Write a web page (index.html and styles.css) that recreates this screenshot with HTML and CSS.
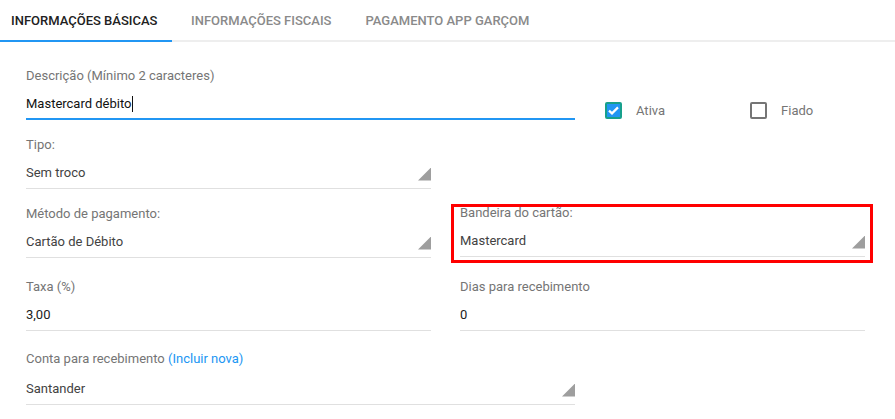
FILE: index.html
```html
<!DOCTYPE html>
<html lang="pt-BR">
<head>
    <meta charset="UTF-8">
    <title>Forma de pagamento</title>
    <link rel="stylesheet" href="styles.css">
</head>
<body>
    <div class="tabs">
        <div class="tab tab-active">Informações básicas</div>
        <div class="tab tab-second">Informações fiscais</div>
        <div class="tab tab-third">Pagamento app garçom</div>
        <div class="tab-rest"></div>
    </div>

    <div class="form">
        <div class="row row-first">
            <div class="field field-wide field-focus">
                <div class="field-label">Descrição (Mínimo 2 caracteres)</div>
                <div class="field-value">Mastercard débito<span class="caret"></span></div>
            </div>
            <label class="check check-ativa">
                <span class="check-box check-on">
                    <svg width="11" height="9" viewBox="0 0 11 9"><path d="M1 4.6 L4 7.4 L10 1.4" fill="none" stroke="#fff" stroke-width="2.2"/></svg>
                </span>
                <span class="check-text">Ativa</span>
            </label>
            <label class="check check-fiado">
                <span class="check-box"></span>
                <span class="check-text">Fiado</span>
            </label>
        </div>

        <div class="row">
            <div class="field">
                <div class="field-label">Tipo:</div>
                <div class="field-value">Sem troco<span class="arrow"></span></div>
            </div>
        </div>

        <div class="row row-split row-metodo">
            <div class="field">
                <div class="field-label">Método de pagamento:</div>
                <div class="field-value">Cartão de Débito<span class="arrow"></span></div>
            </div>
            <div class="highlight">
                <div class="field">
                    <div class="field-label">Bandeira do cartão:</div>
                    <div class="field-value">Mastercard<span class="arrow"></span></div>
                </div>
            </div>
        </div>

        <div class="row row-split row-taxa">
            <div class="field">
                <div class="field-label">Taxa (%)</div>
                <div class="field-value value-dark">3,00</div>
            </div>
            <div class="field">
                <div class="field-label">Dias para recebimento</div>
                <div class="field-value value-dark">0</div>
            </div>
        </div>

        <div class="row">
            <div class="field field-wide">
                <div class="field-label label-gap">Conta para recebimento <a href="#" class="link">(Incluir nova)</a></div>
                <div class="field-value">Santander<span class="arrow"></span></div>
            </div>
        </div>
    </div>
</body>
</html>
```

FILE: styles.css
```css
body {
    margin: 0;
    font-family: Roboto, "Liberation Sans", sans-serif;
    background: #fff;
    color: #333;
}

/* abas */
.tabs {
    display: flex;
    height: 42px;
}

.tab {
    display: flex;
    align-items: center;
    padding: 0 17px 0 17px;
    font-size: 13px;
    font-weight: 500;
    text-transform: uppercase;
    color: #8a8a8a;
    border-bottom: 2px solid #eeeeee;
    box-sizing: border-box;
    white-space: nowrap;
}

.tab-active {
    width: 172px;
    padding-left: 11px;
    color: #212121;
    border-bottom-color: #2196f3;
}

.tab-second {
    padding-left: 19px;
}

.tab-rest {
    flex: 1;
    border-bottom: 2px solid #eeeeee;
}

/* formulario */
.form {
    padding: 26px 0 0 26px;
}

.row {
    display: flex;
    align-items: flex-start;
    margin-bottom: 17px;
}

.row-metodo {
    margin-bottom: 21px;
}

.row-taxa {
    margin-bottom: 20px;
}

.row-split {
    gap: 29px;
}

.field {
    width: 405px;
}

.field-wide {
    width: 549px;
}

.field-label {
    font-size: 13px;
    line-height: 16px;
    color: #757575;
    margin-bottom: 10px;
    white-space: nowrap;
}

.label-gap {
    margin-bottom: 12px;
}

.field-value {
    display: flex;
    justify-content: space-between;
    align-items: center;
    font-size: 13px;
    line-height: 20px;
    color: #424242;
    padding-bottom: 5px;
    border-bottom: 1px solid #e0e0e0;
}

.value-dark {
    color: #212121;
}

.field-focus .field-value {
    justify-content: flex-start;
    color: #111;
    border-bottom: 2px solid #2196f3;
    padding-bottom: 4px;
}

.caret {
    width: 1px;
    height: 16px;
    background: #111;
}

.arrow {
    width: 13px;
    height: 13px;
    background: #9e9e9e;
    clip-path: polygon(100% 0, 100% 100%, 0 100%);
    margin-top: 2px;
}

.link {
    color: #2196f3;
    text-decoration: none;
}

/* caixas de selecao */
.check {
    display: flex;
    align-items: center;
    margin-top: 34px;
    font-size: 13px;
    color: #757575;
}

.check-ativa {
    margin-left: 30px;
}

.check-fiado {
    margin-left: 85px;
}

.check-box {
    width: 17px;
    height: 17px;
    box-sizing: border-box;
    border: 2px solid #757575;
    border-radius: 2px;
    margin-right: 14px;
    display: flex;
    align-items: center;
    justify-content: center;
}

.check-on {
    border-color: #17a08c;
    background: #2196f3;
}

/* destaque vermelho */
.highlight {
    border: 3px solid #ff0000;
    margin: -2px -8px -6px -9px;
    padding: 0 5px 3px 6px;
}

.highlight .field {
    margin-top: -2px;
}
```
